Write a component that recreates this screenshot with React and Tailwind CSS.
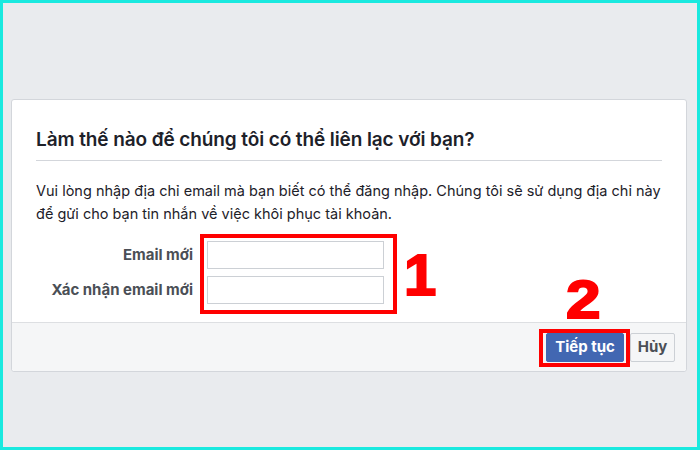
import React from "react";

export default function App() {
  return (
    <div className="w-[700px] h-[450px] border-[3px] border-[#1ae9df] bg-[#e9ebee] pt-[96px] pl-[8px] box-border" style={{ fontFamily: "Inter, 'Noto Sans', sans-serif" }}>
      <div className="relative w-[676px] h-[273px] bg-white border border-[#d3d6db] rounded-[3px] flex flex-col">
        <div className="px-[24px]">
          <h1 className="pt-[28px] pb-[8px] text-[19px] leading-[24px] font-semibold text-[#1d2129] tracking-[-0.1px]">
            Làm thế nào để chúng tôi có thể liên lạc với bạn?
          </h1>
          <div className="h-px bg-[#d3d6db]" />
          <p className="mt-[18px] text-[14.5px] leading-[23px] text-[#1d2129]">
            Vui lòng nhập địa chỉ email mà bạn biết có thể đăng nhập. Chúng tôi sẽ sử dụng địa chỉ này
            <br />
            để gửi cho bạn tin nhắn về việc khôi phục tài khoản.
          </p>
        </div>
        <div className="mt-[16px] flex flex-col gap-[7px]">
          <div className="flex items-center">
            <label className="w-[181px] text-right text-[15px] font-bold text-[#4b4f56]">Email mới</label>
            <div className="ml-[14px] w-[177px] h-[28px] border border-[#ccd0d5] bg-white" />
          </div>
          <div className="flex items-center">
            <label className="w-[181px] text-right text-[15px] font-bold text-[#4b4f56]">Xác nhận email mới</label>
            <div className="ml-[14px] w-[177px] h-[28px] border border-[#ccd0d5] bg-white" />
          </div>
        </div>
        <div className="mt-auto h-[49px] border-t border-[#dddfe2] bg-[#f5f6f7] rounded-b-[3px] flex items-center justify-end pr-[11px] gap-[6px]">
          <button className="w-[78px] h-[29px] bg-[#4267b2] border border-[#4267b2] rounded-[2px] text-white text-[15px] font-bold">
            Tiếp tục
          </button>
          <button className="w-[45px] h-[29px] bg-[#f5f6f7] border border-[#ccd0d5] rounded-[2px] text-[#4b4f56] text-[15px] font-bold">
            Hủy
          </button>
        </div>

        <div className="absolute left-[188px] top-[134px] w-[197px] h-[80px] border-[4px] border-[#ff0000]" />
        <div className="absolute left-[527px] top-[229px] w-[91px] h-[38px] border-[4px] border-[#ff0000]" />
        <div className="absolute left-[392px] top-[146px] text-[58px] leading-[58px] font-bold text-[#ff0000] [-webkit-text-stroke:2px_#ff0000]" style={{ fontFamily: "'Liberation Sans', Arial, sans-serif" }}>
          1
        </div>
        <div className="absolute left-[554px] top-[172px] origin-left scale-x-[1.15] text-[54px] leading-[54px] font-bold text-[#ff0000] [-webkit-text-stroke:2px_#ff0000]" style={{ fontFamily: "'Liberation Sans', Arial, sans-serif" }}>
          2
        </div>
      </div>
    </div>
  );
}
